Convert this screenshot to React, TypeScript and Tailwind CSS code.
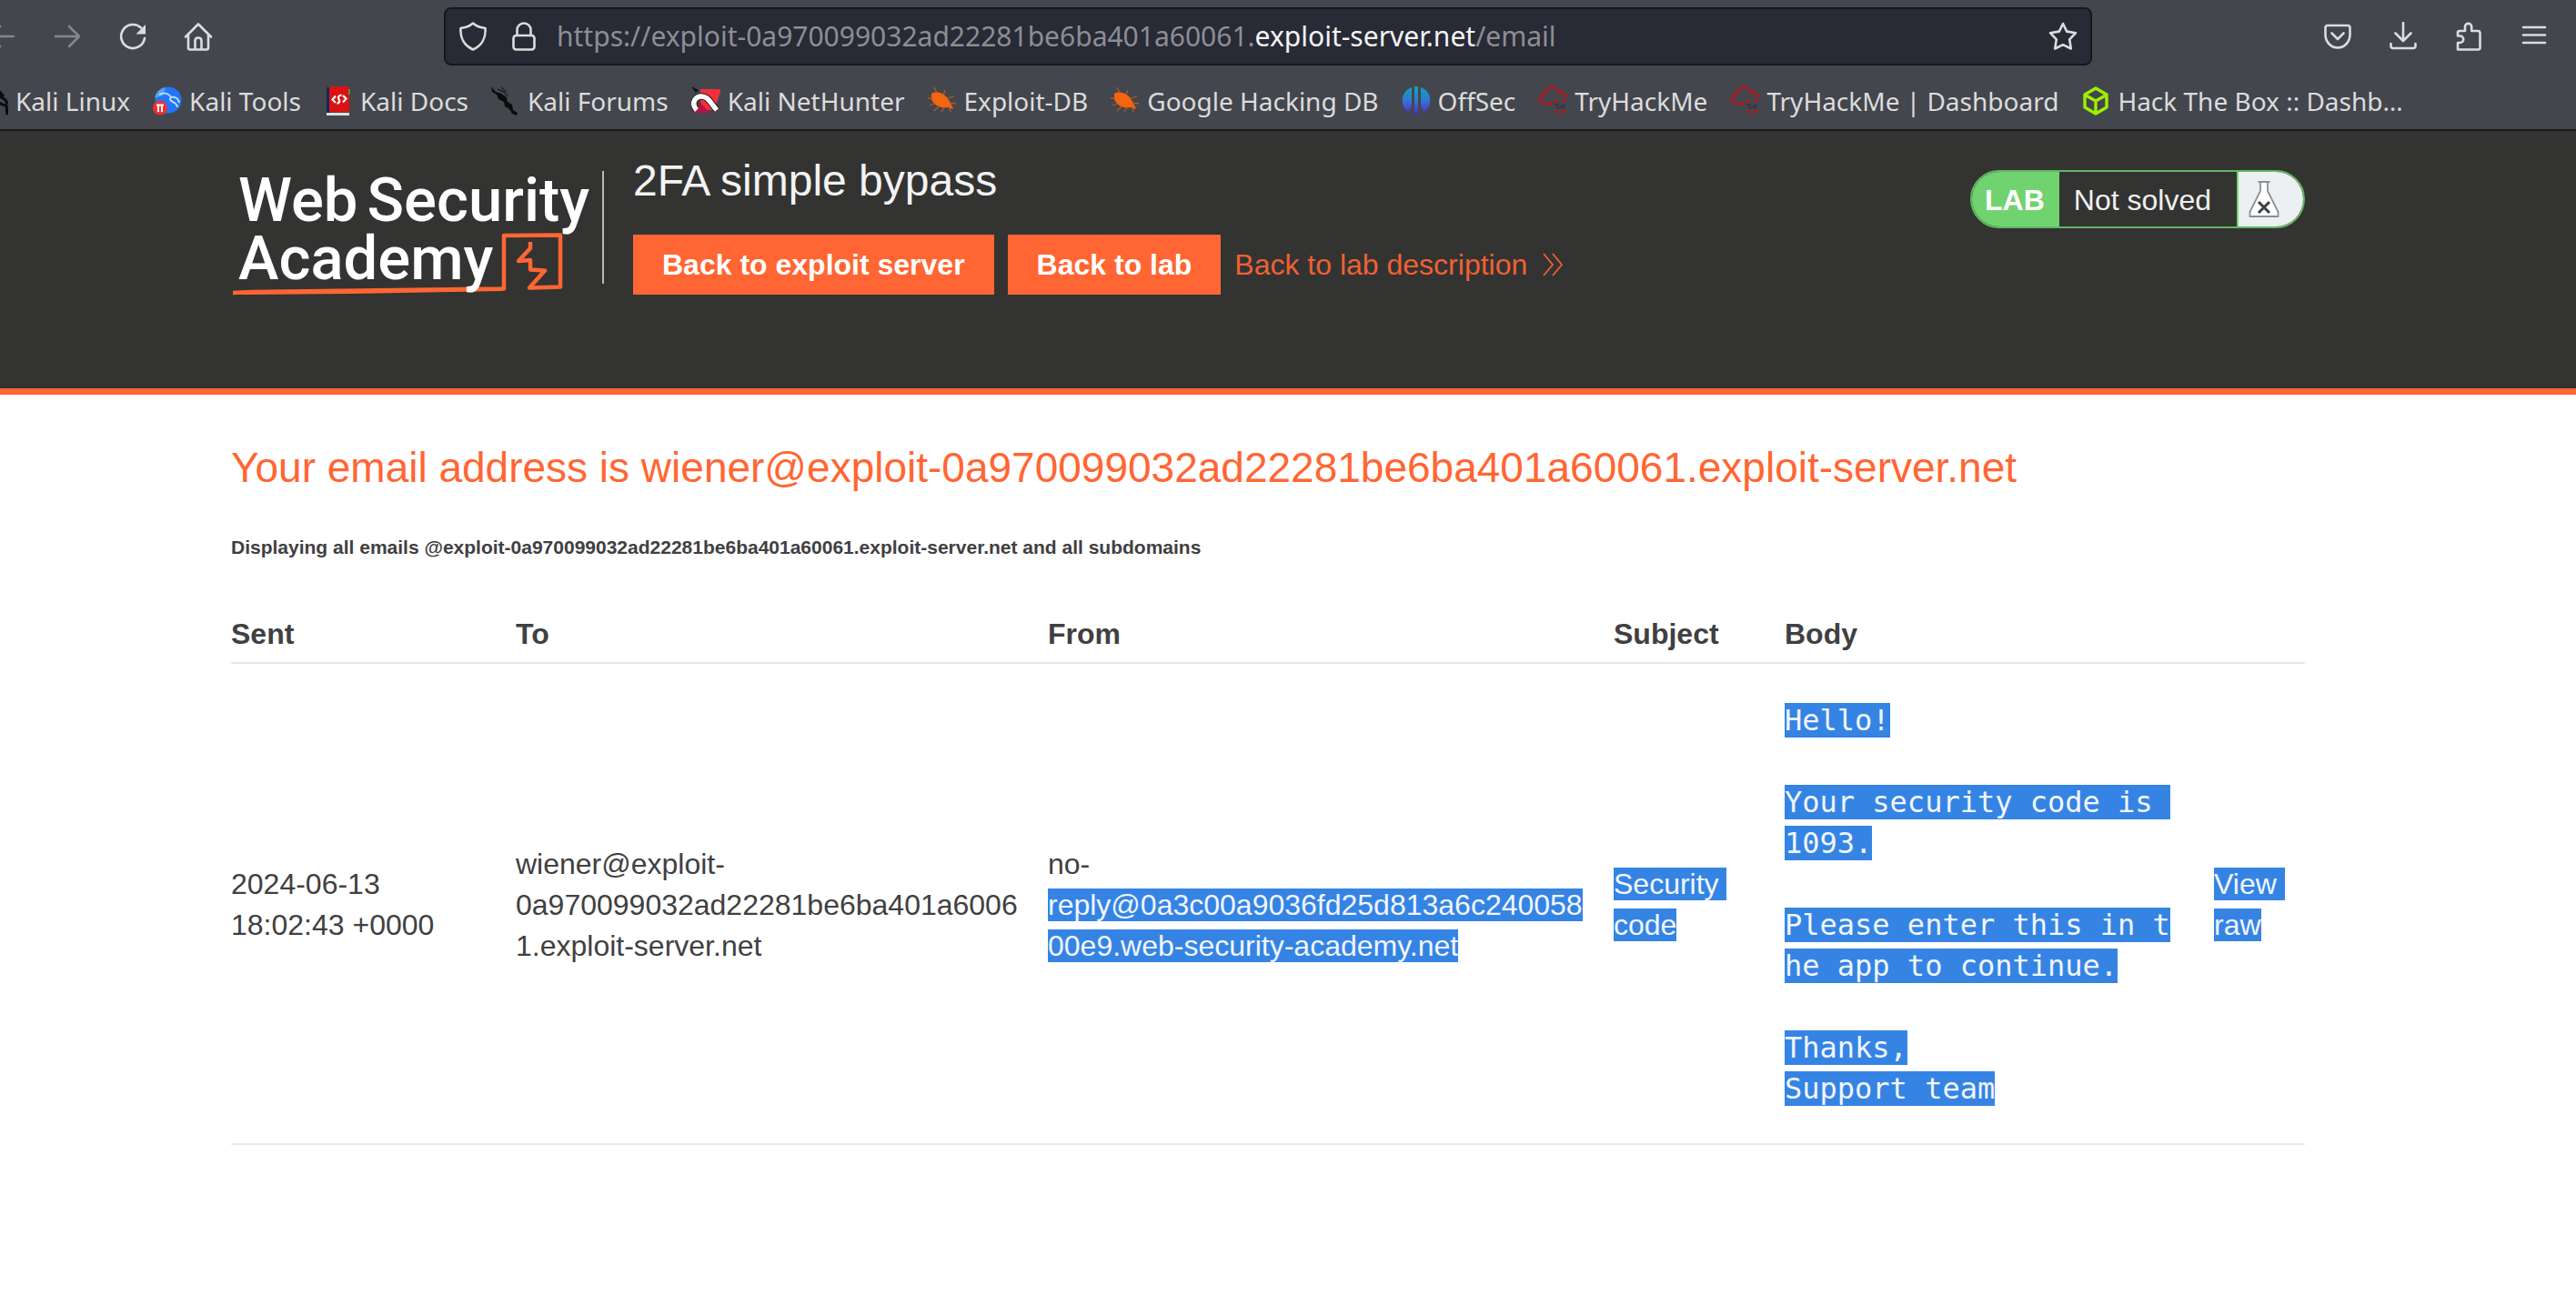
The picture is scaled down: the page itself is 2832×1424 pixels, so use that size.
import React from "react";

type IconProps = { className?: string; children: React.ReactNode; fill?: string };

function LineIcon({ className = "size-8", children, fill = "none" }: IconProps) {
  return (
    <svg
      viewBox="0 0 32 32"
      className={className}
      fill={fill}
      stroke="currentColor"
      strokeWidth="2.6"
      strokeLinecap="round"
      strokeLinejoin="round"
      aria-hidden="true"
    >
      {children}
    </svg>
  );
}

const BackIcon = () => (
  <LineIcon>
    <path d="M29 16H3M14 5 3 16l11 11" />
  </LineIcon>
);
const ForwardIcon = () => (
  <LineIcon>
    <path d="M3 16h26M18 5l11 11-11 11" />
  </LineIcon>
);
const ReloadIcon = () => (
  <LineIcon>
    <path d="M25 6.5A13 13 0 1 0 29 18" />
    <path d="M30 3v10.500H19.500z" fill="currentColor" stroke="none" />
  </LineIcon>
);
const HomeIcon = () => (
  <LineIcon>
    <path d="M2 16.500 16 2.500l14 14M5 14v14.500q0 2 2 2h18q2 0 2-2V14M12.500 30v-9q0-3.500 3.500-3.500t3.500 3.500v9" />
  </LineIcon>
);
const ShieldIcon = () => (
  <LineIcon>
    <path d="M16 1.500C12 5 7 6.500 2.500 7c-.8 10 3.500 19 13.500 23.500C26 26 30.300 17 29.500 7 25 6.500 20 5 16 1.500z" />
  </LineIcon>
);
const LockIcon = () => (
  <LineIcon>
    <rect x="4.500" y="15" width="23" height="15.500" rx="3" />
    <path d="M8.500 15V9a7.500 7.500 0 0 1 15 0v6" />
  </LineIcon>
);
const StarIcon = () => (
  <LineIcon>
    <path d="M16 2l4.200 8.600 9.800 1.600-6.800 7.200 1.600 10.100L16 25.200l-8.800 4.300 1.600-10.100L2 12.200l9.800-1.600z" />
  </LineIcon>
);
const PocketIcon = () => (
  <LineIcon>
    <path d="M5 4h22q2.500 0 2.500 2.500V14c0 8-6 14.500-13.500 14.500S2.500 22 2.500 14V6.500Q2.500 4 5 4z" />
    <path d="M9.500 12.500 16 19l6.500-6.500" />
  </LineIcon>
);
const DownloadIcon = () => (
  <LineIcon>
    <path d="M16 1v20M7.500 12.500 16 21l8.500-8.500M2.500 24v2.500q0 2.500 2.500 2.500h22q2.500 0 2.500-2.500V24" />
  </LineIcon>
);
const PuzzleIcon = () => (
  <LineIcon>
    <path d="M4 30.500V23h2.500a3.700 3.700 0 0 0 0-7.500H4V12q0-2 2-2h6V5.500a3.600 3.600 0 0 1 7.200 0V10H26q2.500 0 2.500 2.500v16q0 2-2 2z" />
  </LineIcon>
);
const MenuIcon = () => (
  <LineIcon>
    <path d="M4 6h24M4 14.500h24M4 23h24" />
  </LineIcon>
);

const favicon = "size-8 shrink-0";

const DragonIcon = () => (
  <svg viewBox="0 0 32 32" className={favicon} fill="#0b0b0c" aria-hidden="true">
    <path d="M0 0l5 6 6 2 6 4 1 5 5 3 1 6 5 3-1 3-5-2-3-5-5-3-1-5-6-3-2-5-5-3z" />
    <path d="M7 3l7 3 4 5M11 1l6 5" fill="none" stroke="#0b0b0c" strokeWidth="1" />
  </svg>
);
const KaliLinuxIcon = () => (
  <svg viewBox="0 0 32 32" className={favicon} fill="none" stroke="#0b0b0c" strokeWidth="3" aria-hidden="true">
    <path d="M2 6c10-1 18 1 22 6 4 1 6 4 7 7M8 12c10 0 12 8 22 9 1 4 0 7 1 10M20 3l7 8" />
  </svg>
);
const ToolsIcon = () => (
  <svg viewBox="0 0 32 32" className={favicon} aria-hidden="true">
    <circle cx="17" cy="15" r="14.500" fill="#2277f5" />
    <path d="M2 13C3 6 8 2 14 1l-3 9z" fill="#7fbcff" opacity=".6" />
    <path d="M7 9c6-3 11-1 13 3 5-1 8 2 9 6M20 12c-5 5 7 4 7 11" fill="none" stroke="#b9dcff" strokeWidth="2" />
    <circle cx="8" cy="23.500" r="8" fill="#ee3135" />
    <path d="M4 20.500h8M6 20.500V28M10 20.500V28" stroke="#fff" strokeWidth="2" />
  </svg>
);
const DocsIcon = () => (
  <svg viewBox="-3 0 32 32" className={favicon} aria-hidden="true">
    <path d="M0 1h4v28H0z" fill="#16265c" />
    <path d="M3 0h22v28H3z" fill="#da1212" />
    <path d="M24 3h2v6h-2z" fill="#3f9b46" />
    <path d="M0 29h25v3H0z" fill="#e8dcdc" />
    <path d="M10 10.500l-3.500 4 3.500 3.500M18 10l3.500 3.500L18 17.500M16.500 9.500q-5 1-3 4.500t-2 5" fill="none" stroke="#fff" strokeWidth="2.200" />
  </svg>
);
const NetHunterIcon = () => (
  <svg viewBox="0 0 32 32" className={favicon} aria-hidden="true">
    <path d="M10 3h22v3l-5 15 3 5H14l-4-9z" fill="#f0303a" />
    <path d="M1 20h11l8 9H1z" fill="#b5124a" />
    <path d="M0 0l8 4-3 3z" fill="#111" />
    <path d="M6 26C0 20 3 12 10 11c8-1 11 7 18 15" fill="none" stroke="#33181c" strokeWidth="7.500" />
    <path d="M6 26C0 20 3 12 10 11c8-1 11 7 18 15" fill="none" stroke="#fff" strokeWidth="5.500" />
  </svg>
);
const BugIcon = () => (
  <svg viewBox="0 0 32 32" className={favicon} aria-hidden="true">
    <path d="M4 8C9 5 17 7 21 12l5 8 2 5-6-2C14 25 6 20 4 14z" fill="#f2660f" />
    <path d="M10 7 7 1M17 9l2-5M22 13l7-2M24 18l7 1M5 13H0M7 19l-5 2M12 22l-5 5M18 23l-3 5M24 23l1 5" stroke="#b35a22" strokeWidth="1.300" />
  </svg>
);
const OffSecIcon = () => (
  <svg viewBox="0 0 32 32" className={favicon} aria-hidden="true">
    <defs>
      <linearGradient id="offsec" gradientUnits="userSpaceOnUse" x1="0" y1="0" x2="0" y2="32">
        <stop offset="0" stopColor="#12a3bd" />
        <stop offset=".5" stopColor="#2f77d0" />
        <stop offset="1" stopColor="#5b1fd0" />
      </linearGradient>
    </defs>
    <path d="M11 1v18q0 6-4 9C-2 21-2 6 11 1zM21 1v18q0 6 4 9C34 21 34 6 21 1zM14 0h4v29l-2 3-2-3z" fill="url(#offsec)" />
  </svg>
);
const CloudIcon = () => (
  <svg viewBox="0 0 32 32" className={favicon} fill="none" stroke="#a81c22" strokeWidth="3" aria-hidden="true">
    <path d="M16 19H8c-8-1-8-9-1-10 0-9 14-11 16-2 5-1 8 3 7 6" />
    <path d="M18 16h4m3 0h6M18 26h6m2 1h6M23 30h5" strokeWidth="2.400" strokeDasharray="4 1" />
    <path d="M18 20h5m3 1h4M20 23h9" stroke="#343840" strokeWidth="2.400" />
  </svg>
);
const CubeIcon = () => (
  <svg viewBox="0 0 32 32" className={favicon} fill="none" stroke="#9fef00" strokeWidth="3.400" strokeLinejoin="round" aria-hidden="true">
    <path d="M16 2l12 7v14l-12 7-12-7V9zM4.500 9.500 16 16l11.500-6.500M16 16v13" />
  </svg>
);

const bookmarks = [
  { label: "Kali Linux", icon: <KaliLinuxIcon /> },
  { label: "Kali Tools", icon: <ToolsIcon /> },
  { label: "Kali Docs", icon: <DocsIcon /> },
  { label: "Kali Forums", icon: <DragonIcon /> },
  { label: "Kali NetHunter", icon: <NetHunterIcon /> },
  { label: "Exploit-DB", icon: <BugIcon /> },
  { label: "Google Hacking DB", icon: <BugIcon /> },
  { label: "OffSec", icon: <OffSecIcon /> },
  { label: "TryHackMe", icon: <CloudIcon /> },
  { label: "TryHackMe | Dashboard", icon: <CloudIcon /> },
  { label: "Hack The Box :: Dashb…", icon: <CubeIcon /> },
];

function NavButton({ label, muted, children }: { label: string; muted?: boolean; children: React.ReactNode }) {
  return (
    <button
      type="button"
      aria-label={label}
      className={`flex h-16 w-[72px] items-center justify-center ${muted ? "text-[#85868b]" : "text-[#dcdcdc]"}`}
    >
      {children}
    </button>
  );
}

function BrowserBar() {
  return (
    <div className="overflow-hidden border-b-2 border-[#19191d] bg-[#44464d] font-['Noto_Sans',sans-serif] text-[#dcdcdc]">
      <div className="-ml-[34px] flex items-center pt-2 pr-[10px]">
        <NavButton label="Back" muted>
          <BackIcon />
        </NavButton>
        <NavButton label="Forward" muted>
          <ForwardIcon />
        </NavButton>
        <NavButton label="Reload">
          <ReloadIcon />
        </NavButton>
        <NavButton label="Home">
          <HomeIcon />
        </NavButton>
        <div className="mx-[234px] flex h-16 grow items-center rounded-lg border-2 border-[#17171b] bg-[#282a36] px-3.5">
          <button type="button" aria-label="Tracking protection" className="mr-6">
            <ShieldIcon />
          </button>
          <button type="button" aria-label="Site information" className="mr-5">
            <LockIcon />
          </button>
          <div
            role="textbox"
            aria-label="Address"
            contentEditable
            suppressContentEditableWarning
            className="grow text-[30px] leading-10 whitespace-nowrap text-[#8d8e94]"
          >
            https://exploit-0a970099032ad22281be6ba401a60061.
            <span className="text-[#f4f4f4]">exploit-server.net</span>/email
          </div>
          <button type="button" aria-label="Bookmark this page">
            <StarIcon />
          </button>
        </div>
        <NavButton label="Save to Pocket">
          <PocketIcon />
        </NavButton>
        <NavButton label="Downloads">
          <DownloadIcon />
        </NavButton>
        <NavButton label="Extensions">
          <PuzzleIcon />
        </NavButton>
        <NavButton label="Menu">
          <MenuIcon />
        </NavButton>
      </div>
      <nav aria-label="Bookmarks" className="-ml-[23px] flex gap-[25px] pt-[19px] pb-[11px]">
        {bookmarks.map((b) => (
          <a key={b.label} href="#" className="flex items-center gap-2 text-[28px] leading-10 whitespace-nowrap">
            {b.icon}
            {b.label}
          </a>
        ))}
      </nav>
    </div>
  );
}

function Logo() {
  return (
    <a
      href="#"
      aria-label="Web Security Academy"
      className="relative mt-[14px] block h-[124px] w-[410px] shrink-0 border-r-2 border-[#b9b9b8] pl-2 font-['Roboto',sans-serif] text-[67px] leading-[64px] font-medium text-white"
    >
      <svg viewBox="0 0 410 142" className="absolute top-0 left-0 h-[142px] w-[410px]" fill="none" stroke="#ff6633" aria-hidden="true">
        <path d="M2 134l22-1 276-3.500V71l62-.5v57l-34 1 17-19-16-1V98l-13 1 13-14V78" strokeWidth="4.500" strokeLinejoin="round" />
        <path d="M12 134.500l120-1 166-3" strokeWidth="3" />
      </svg>
      <span className="relative flex gap-2.5">
        <span>Web</span>
        <span>Security</span>
      </span>
      <span className="relative block">Academy</span>
    </a>
  );
}

function LabStatus() {
  return (
    <div className="mt-[43px] flex h-16 items-stretch overflow-hidden rounded-full border-2 border-[#62b75f] text-[32px] leading-[62px]">
      <p className="bg-[#71d36f] pr-4 pl-[14px] font-bold text-white">LAB</p>
      <p className="pr-7 pl-4 text-[#f0f0ef]">Not solved</p>
      <span className="flex w-[73px] items-center border-l-2 border-[#71d36f] bg-[#ecf0f3] pl-[11px]">
        <svg viewBox="0 0 34 42" className="h-[42px] w-[34px]" fill="#fff" stroke="#8f8f8f" strokeWidth="1.800" aria-hidden="true">
          <path d="M10.500 2h13M13 2v10L1.500 35v5h31v-5L21 12V2" />
          <path d="M11 24l12 12M23 24 11 36" stroke="#3f3f3f" strokeWidth="3" />
        </svg>
      </span>
    </div>
  );
}

function LabHeader() {
  return (
    <header className="flex items-start border-b-[7px] border-[#ff6633] bg-[#333332] pr-[298px] pb-[103px] pl-[254px]">
      <div className="pt-[30px]">
        <Logo />
      </div>
      <div className="ml-8 pt-[27px]">
        <h2 className="text-5xl leading-[56px] text-[#f3f3f3]">2FA simple bypass</h2>
        <div className="mt-[31px] flex items-center gap-[15px] text-[32px] leading-9">
          <a href="#" className="bg-[#ff6633] px-8 py-[15px] font-bold text-white">
            Back to exploit server
          </a>
          <a href="#" className="bg-[#ff6633] px-8 py-[15px] font-bold text-white">
            Back to lab
          </a>
          <a href="#" className="flex items-center gap-4 text-[#ef6134]">
            Back to lab description
            <svg viewBox="0 0 24 26" className="h-[26px] w-6" fill="none" stroke="currentColor" strokeWidth="1.800" aria-hidden="true">
              <path d="M2 1l10 12L2 25M12 1l10 12-10 12" />
            </svg>
          </a>
        </div>
      </div>
      <div className="ml-auto">
        <LabStatus />
      </div>
    </header>
  );
}

/** Text drawn as part of the current selection, one highlighted run per line. */
function Selected({ lines }: { lines: string[] }) {
  return (
    <>
      {lines.map((line, i) => (
        <React.Fragment key={i}>
          {line && <span className="bg-[#3584e4] text-[#f1f6fd]">{line}</span>}
          {i < lines.length - 1 && "\n"}
        </React.Fragment>
      ))}
    </>
  );
}

const bodyLines = [
  "Hello!",
  "",
  "Your security code is ",
  "1093.",
  "",
  "Please enter this in t",
  "he app to continue.",
  "",
  "Thanks,",
  "Support team",
];

const th = "pb-2 font-bold";
const td = "pt-10 pb-[37px] align-middle";

function Inbox() {
  return (
    <main className="pt-[52px] pr-[298px] pb-40 pl-[254px] text-[#404042]">
      <h1 className="text-[46px] leading-[56px] text-[#ff6633]">
        Your email address is wiener@exploit-0a970099032ad22281be6ba401a60061.exploit-server.net
      </h1>
      <p className="mt-[46px] text-[21px] leading-7 font-bold">
        Displaying all emails @exploit-0a970099032ad22281be6ba401a60061.exploit-server.net and all subdomains
      </p>
      <table className="mt-[59px] w-full table-fixed text-left text-[32px] leading-[45px]">
        <colgroup>
          <col className="w-[313px]" />
          <col className="w-[585px]" />
          <col className="w-[622px]" />
          <col className="w-[188px]" />
          <col />
          <col className="w-[100px]" />
        </colgroup>
        <thead>
          <tr className="border-b-2 border-[#e8e8e8]">
            <th className={th}>Sent</th>
            <th className={th}>To</th>
            <th className={th}>From</th>
            <th className={th}>Subject</th>
            <th className={th}>Body</th>
            <th className={th} aria-label="Raw message" />
          </tr>
        </thead>
        <tbody>
          <tr className="border-b-2 border-[#e8e8e8]">
            <td className={`${td} pr-16`}>2024-06-13 18:02:43 +0000</td>
            <td className={`${td} pr-5 wrap-break-word`}>wiener@exploit-0a970099032ad22281be6ba401a60061.exploit-server.net</td>
            <td className={`${td} pr-5 wrap-break-word`}>
              no-<wbr />
              <span className="bg-[#3584e4] text-[#f1f6fd]">reply@0a3c00a9036fd25d813a6c24005800e9.web-security-academy.net</span>
            </td>
            <td className={`${td} whitespace-pre`}>
              <Selected lines={["Security ", "code"]} />
            </td>
            <td className={td}>
              <pre className="font-['DejaVu_Sans_Mono',monospace]">
                <Selected lines={bodyLines} />
              </pre>
            </td>
            <td className={`${td} whitespace-pre`}>
              <a href="#">
                <Selected lines={["View ", "raw"]} />
              </a>
            </td>
          </tr>
        </tbody>
      </table>
    </main>
  );
}

export default function App() {
  return (
    <div className="min-h-screen bg-white font-['Liberation_Sans',Arial,sans-serif]">
      <BrowserBar />
      <LabHeader />
      <Inbox />
    </div>
  );
}
